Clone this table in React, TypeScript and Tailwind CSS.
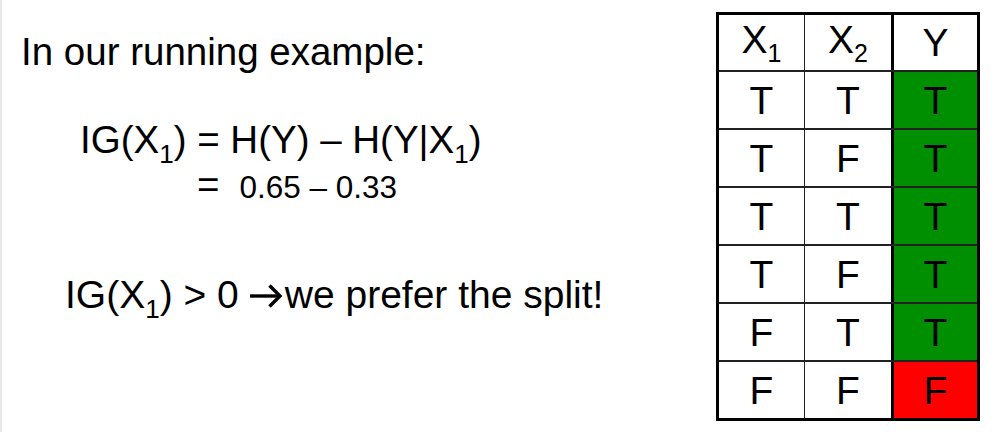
const ROWS: [string, string, string][] = [
  ["T", "T", "T"],
  ["T", "F", "T"],
  ["T", "T", "T"],
  ["T", "F", "T"],
  ["F", "T", "T"],
  ["F", "F", "F"],
];

function Sub({ children, small }: { children: string; small?: boolean }) {
  return (
    <span className={small ? "text-[25px] align-[-9px]" : "text-[26px] align-[-10px]"}>
      {children}
    </span>
  );
}

function Arrow() {
  return (
    <svg
      width="40"
      height="24"
      viewBox="0 0 40 24"
      className="inline-block align-baseline ml-[6px]"
    >
      <path d="M5 12 H34" stroke="black" strokeWidth="3.4" fill="none" />
      <path d="M24.5 1.5 L35 12 L24.5 22.5" stroke="black" strokeWidth="3.4" fill="none" />
    </svg>
  );
}

export default function App() {
  return (
    <div
      className="flex w-[995px] h-[432px] bg-white text-black border-l-2 border-[#e8e8e8] overflow-hidden"
      style={{ fontFamily: '"Liberation Sans", Arial, sans-serif' }}
    >
      <div className="flex-1 flex flex-col pt-[33px] pl-[19px] text-[38.5px] leading-none">
        <div className="h-[39px] whitespace-nowrap">In our running example:</div>

        <div className="mt-[49px] pl-[59px] h-[39px] whitespace-nowrap">
          IG(X<Sub>1</Sub>) = H(Y) – H(Y|X<Sub>1</Sub>)
        </div>
        <div className="mt-[6px] pl-[176px] h-[39px] whitespace-nowrap">
          =<span className="ml-[20px] text-[31.5px]">0.65 – 0.33</span>
        </div>

        <div className="mt-[70px] pl-[44px] h-[39px] whitespace-nowrap text-[39px]">
          IG(X<Sub>1</Sub>) &gt; 0<Arrow />we prefer the split!
        </div>
      </div>

      <div className="pt-[12px] pr-[15px]">
        <div className="w-[264px] border-[3px] border-black text-[39px] leading-none">
          <div className="flex h-[55px]">
            <div className="w-[85px] flex items-center justify-center">
              <span>
                X<Sub small>1</Sub>
              </span>
            </div>
            <div className="w-[87px] border-l border-[#222] flex items-center justify-center">
              <span>
                X<Sub small>2</Sub>
              </span>
            </div>
            <div className="flex-1 border-l-[3px] border-black flex items-center justify-center">
              Y
            </div>
          </div>
          {ROWS.map((r, i) => (
            <div key={i} className="flex h-[58px] border-t-2 border-[#222]">
              <div className="w-[85px] flex items-center justify-center">{r[0]}</div>
              <div className="w-[87px] border-l border-[#222] flex items-center justify-center">
                {r[1]}
              </div>
              <div
                className={`flex-1 border-l-[3px] border-black flex items-center justify-center ${
                  r[2] === "T" ? "bg-[#008f00]" : "bg-[#ff0000]"
                }`}
              >
                {r[2]}
              </div>
            </div>
          ))}
        </div>
      </div>
    </div>
  );
}
